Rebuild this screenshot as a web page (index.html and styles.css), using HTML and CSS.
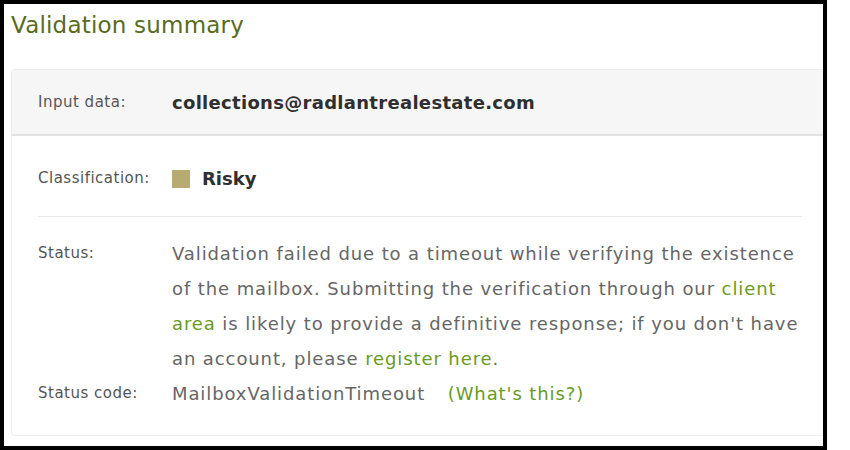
FILE: index.html
```html
<!DOCTYPE html>
<html lang="en">
<head>
    <meta charset="UTF-8">
    <meta name="viewport" content="width=device-width, initial-scale=1.0">
    <title>Validation summary</title>
    <link rel="stylesheet" href="styles.css">
</head>
<body>
    <div class="frame">
        <h2 class="title">Validation summary</h2>
        <div class="card">
            <div class="card-head">
                <div class="label">Input data:</div>
                <div class="value email">collections@radlantrealestate.com</div>
            </div>
            <div class="card-body">
                <div class="row row-class">
                    <div class="label">Classification:</div>
                    <div class="value"><span class="swatch"></span><span class="class-name">Risky</span></div>
                </div>
                <div class="row row-status">
                    <div class="label">Status:</div>
                    <div class="value text">Validation failed due to a timeout while verifying the existence of the mailbox. Submitting the verification through our <a href="#">client area</a> is likely to provide a definitive response; if you don't have an account, please <a href="#">register here</a>.</div>
                </div>
                <div class="row row-code">
                    <div class="label">Status code:</div>
                    <div class="value text">MailboxValidationTimeout <a href="#" class="whats">(What's this?)</a></div>
                </div>
            </div>
        </div>
    </div>
</body>
</html>
```

FILE: styles.css
```css
body {
    margin: 0;
    padding: 0;
    background-color: #ffffff;
    font-family: 'DejaVu Sans', 'Open Sans', sans-serif;
    overflow: hidden;
}

.frame {
    width: 827px;
    height: 450px;
    box-sizing: border-box;
    border: 4px solid #000000;
    overflow: hidden;
    padding: 0 0 0 7px;
}

.title {
    margin: 0;
    padding: 4px 0 0 0;
    height: 65px;
    box-sizing: border-box;
    font-size: 23px;
    font-weight: normal;
    letter-spacing: 0.2px;
    line-height: 34px;
    color: #596b1e;
}

.card {
    width: 818px;
    border: 1px solid #ececec;
    border-radius: 4px;
    box-sizing: border-box;
    overflow: hidden;
}

.card-head {
    display: flex;
    align-items: center;
    height: 66px;
    box-sizing: border-box;
    padding: 0 26px;
    background-color: #f6f6f6;
    border-bottom: 2px solid #e2e2e2;
}

.card-body {
    padding: 0 26px 24px 26px;
}

.row {
    display: flex;
    align-items: flex-start;
}

.label {
    width: 134px;
    flex-shrink: 0;
    font-size: 15px;
    letter-spacing: 0.5px;
    color: #555555;
}

.value {
    color: #333333;
}

.email {
    font-size: 18px;
    font-weight: bold;
    letter-spacing: 0.3px;
    color: #2f2f2f;
}

.row-class {
    align-items: center;
    height: 81px;
    border-bottom: 1px solid #e8e8e8;
    padding-top: 5px;
    box-sizing: border-box;
}

.row-class .value {
    display: flex;
    align-items: center;
}

.swatch {
    display: inline-block;
    width: 18px;
    height: 18px;
    background-color: #b7aa72;
    margin-right: 12px;
}

.class-name {
    font-size: 18px;
    font-weight: bold;
    color: #2f2f2f;
}

.row-status {
    padding-top: 19px;
}

.row .label {
    line-height: 35px;
}

.text {
    font-size: 18px;
    letter-spacing: 0.9px;
    line-height: 35px;
    color: #666666;
}

.text a {
    color: #6a9a24;
    text-decoration: none;
}

.whats {
    margin-left: 16px;
}
```
